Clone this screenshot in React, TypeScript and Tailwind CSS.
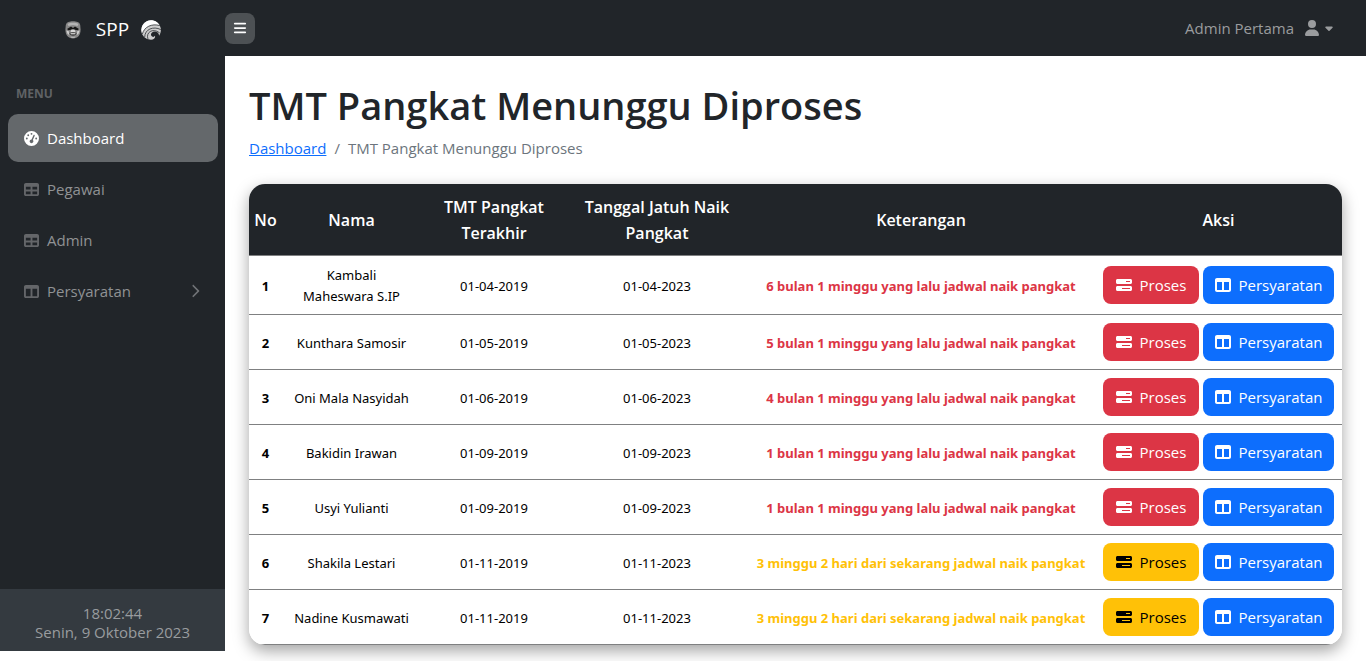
import React from "react";
import {
  FaBars,
  FaBarsProgress,
  FaCaretDown,
  FaChevronRight,
  FaGaugeHigh,
  FaTable,
  FaTableColumns,
  FaUser,
} from "react-icons/fa6";

type Row = { name: string; last: string; due: string; note: string; late: boolean };

const rows: Row[] = [
  { name: "Kambali Maheswara S.IP", last: "01-04-2019", due: "01-04-2023", note: "6 bulan 1 minggu yang lalu jadwal naik pangkat", late: true },
  { name: "Kunthara Samosir", last: "01-05-2019", due: "01-05-2023", note: "5 bulan 1 minggu yang lalu jadwal naik pangkat", late: true },
  { name: "Oni Mala Nasyidah", last: "01-06-2019", due: "01-06-2023", note: "4 bulan 1 minggu yang lalu jadwal naik pangkat", late: true },
  { name: "Bakidin Irawan", last: "01-09-2019", due: "01-09-2023", note: "1 bulan 1 minggu yang lalu jadwal naik pangkat", late: true },
  { name: "Usyi Yulianti", last: "01-09-2019", due: "01-09-2023", note: "1 bulan 1 minggu yang lalu jadwal naik pangkat", late: true },
  { name: "Shakila Lestari", last: "01-11-2019", due: "01-11-2023", note: "3 minggu 2 hari dari sekarang jadwal naik pangkat", late: false },
  { name: "Nadine Kusmawati", last: "01-11-2019", due: "01-11-2023", note: "3 minggu 2 hari dari sekarang jadwal naik pangkat", late: false },
];

function MaskLogo() {
  return (
    <svg viewBox="0 0 16 18" className="h-[18px] w-4" aria-hidden="true">
      <path d="M.8 4C1.500 1 4.500.3 8 .3S14.500 1 15.200 4l.4 4.500c0 5.500-2.600 9-7.600 9S.4 14 .4 8.500Z" fill="#878787" />
      <path d="M2.500 3C4.500 1.300 11.500 1.300 13.500 3L12.500 5 8 4 3.500 5Z" fill="#b4b4b4" />
      <path d="M2 8 6 5.500 8 7 10 5.500 14 8 12.500 9.300 10 8.800 8 8 6 8.800 3.500 9.300Z" fill="#161616" />
      <path d="M1.300 9.500 3.800 10.300 4.200 14 2.500 12.800ZM14.700 9.500 12.200 10.300 11.800 14 13.500 12.800Z" fill="#cfcfcf" />
      <path d="M6.300 8.800h3.400l.8 2.400h-5Z" fill="#d8d8d8" />
      <path d="M4.300 12q3.700-1.400 7.400 0-.6 2.700-3.700 2.700T4.300 12Z" fill="#3c3c3c" />
      <path d="M5.300 12.200h5.400l-.8 1.100H6.100Z" fill="#f2f2f2" />
      <path d="M5.500 15.300q2.500 1 5 0L9.500 17h-3Z" fill="#b5b5b5" />
    </svg>
  );
}

function SwirlLogo() {
  return (
    <svg viewBox="0 0 20 20" className="size-5" aria-hidden="true">
      <path d="M10 .2a9.800 9.800 0 0 1 9.600 12c-.3 1.300-.8 2.500-1.500 3.500 0-2.300-1.600-4.200-4.100-4.300-2.900-.1-4.800 2.400-3.700 4.400.9 1.500 3 1.500 3.600 0 .8 2-.8 3.900-3.900 4A9.800 9.800 0 0 1 10 .2Z" fill="#cdcdcd" />
      <path d="M10 .2c4 0 7.200 2.200 8.800 5.400C11.500 3.300 4.200 5.500 1.300 14A9.800 9.800 0 0 1 10 .2Z" fill="#fff" />
      <g fill="none" stroke="#2c3034" strokeWidth="0.8">
        <path d="M1.300 14.200C3 6.800 11 3.200 18.800 5.600" />
        <path d="M3.700 17C3.800 9.300 12.300 5.800 19.800 9.600" />
        <path d="M7 19.200C4.500 12.500 11.500 7.500 18.600 12.800" />
      </g>
    </svg>
  );
}

type NavProps = { icon: React.ReactNode; label: string; active?: boolean; more?: boolean };

function NavItem({ icon, label, active, more }: NavProps) {
  return (
    <a
      href="#"
      className={
        active
          ? "flex h-12 items-center rounded-[10px] bg-[#64686b] px-4 text-white"
          : "flex h-12 items-center rounded-[10px] px-4 text-[#909294]"
      }
    >
      <span className={active ? "mr-2 text-[15px] text-white" : "mr-2 text-[15px] text-[#646669]"}>{icon}</span>
      {label}
      {more && <FaChevronRight className="ml-auto size-3.5 text-[#707376]" />}
    </a>
  );
}

const head = "border-b border-[#7f8081] text-center align-middle font-semibold";
const cell = "border-b border-[#7f8081] px-2 pt-0.5 text-center align-middle";

export default function App() {
  return (
    <div className="flex min-h-screen flex-col bg-white font-['Open_Sans','Noto_Sans',sans-serif] text-[15px] leading-6 text-[#212529]">
      <header className="flex h-14 shrink-0 items-center bg-[#212529] text-[#9a9c9e]">
        <a href="#" className="flex w-[225px] shrink-0 items-center justify-center pt-1 pl-px text-[19px] text-white">
          <MaskLogo />
          <span className="mr-3 mb-0.5 ml-[15px]">SPP</span>
          <SwirlLogo />
        </a>
        <button aria-label="Toggle menu" className="flex h-[31px] w-[30px] items-center justify-center rounded-lg bg-[#4d5154] text-white">
          <FaBars className="size-3.5" />
        </button>
        <button className="mr-[31px] ml-auto flex items-center">
          Admin Pertama
          <FaUser className="ml-[11px] h-4 w-3.5" />
          <FaCaretDown className="ml-1 size-3" />
        </button>
      </header>

      <div className="flex flex-1">
        <aside className="mb-[10px] flex w-[225px] shrink-0 flex-col bg-[#212529]">
          <nav className="flex flex-1 flex-col gap-[3px] pr-[7px] pl-2">
            <h2 className="mt-7 mb-[3px] pl-2 text-xs leading-5 font-bold text-[#5f6265]">MENU</h2>
            <div className="mt-1 flex flex-col gap-[3px]">
              <NavItem icon={<FaGaugeHigh />} label="Dashboard" active />
              <NavItem icon={<FaTable />} label="Pegawai" />
              <NavItem icon={<FaTable />} label="Admin" />
              <NavItem icon={<FaTableColumns />} label="Persyaratan" more />
            </div>
          </nav>
          <div className="h-[62px] bg-[#343a40] pt-[15px] text-center leading-[19px] text-[#999c9f]">
            <div>18:02:44</div>
            <div>Senin, 9 Oktober 2023</div>
          </div>
        </aside>

        <main className="min-w-0 flex-1 px-6 pt-[25px]">
          <h1 className="mb-[7px] text-[38px] leading-[48px] font-semibold whitespace-nowrap">TMT Pangkat Menunggu Diproses</h1>
          <nav aria-label="Breadcrumb" className="mb-6 flex gap-2 text-[#6c757d]">
            <a href="#" className="text-[#0d6efd] underline">Dashboard</a>
            <span>/</span>
            <span>TMT Pangkat Menunggu Diproses</span>
          </nav>
          <div className="overflow-hidden rounded-2xl shadow-[0_6px_16px_rgba(0,0,0,0.36)]">
            <table className="w-full table-fixed border-separate border-spacing-0 bg-white">
              <colgroup>
                <col className="w-[33px]" />
                <col className="w-[139px]" />
                <col className="w-[146px]" />
                <col className="w-[180px]" />
                <col />
                <col className="w-[247px]" />
              </colgroup>
              <thead className="bg-[#212529] text-base leading-[26px] text-white">
                <tr className="h-[72px]">
                  <th className={head}>No</th>
                  <th className={`${head} px-2`}>Nama</th>
                  <th className={`${head} px-2`}>TMT Pangkat Terakhir</th>
                  <th className={`${head} px-2`}>Tanggal Jatuh Naik Pangkat</th>
                  <th className={`${head} px-2`}>Keterangan</th>
                  <th className={`${head} px-2`}>Aksi</th>
                </tr>
              </thead>
              <tbody className="font-['Noto_Sans','Open_Sans',sans-serif] text-[13px] leading-[21px] text-black">
                {rows.map((r, i) => (
                  <tr key={r.name}>
                    <th scope="row" className="border-b border-[#7f8081] pt-0.5 text-center font-bold">{i + 1}</th>
                    <td className="border-b border-[#7f8081] px-2.5 pt-[9px] pb-[7px] text-center align-middle">{r.name}</td>
                    <td className={cell}>{r.last}</td>
                    <td className={cell}>{r.due}</td>
                    <td className={`${cell} font-bold whitespace-nowrap ${r.late ? "text-[#dc3545]" : "text-[#ffc107]"}`}>{r.note}</td>
                    <td className="border-b border-[#7f8081] px-2 py-2 align-middle">
                      <div className="flex gap-1 font-['Open_Sans','Noto_Sans',sans-serif] text-[15px]">
                        <button
                          className={
                            r.late
                              ? "flex h-[38px] w-24 items-center justify-center gap-2 rounded-lg bg-[#dc3545] text-white"
                              : "flex h-[38px] w-24 items-center justify-center gap-2 rounded-lg bg-[#ffc107] text-black"
                          }
                        >
                          <FaBarsProgress className="size-4" />
                          Proses
                        </button>
                        <button className="flex h-[38px] w-[131px] items-center justify-center gap-2 rounded-lg bg-[#0d6efd] text-white">
                          <FaTableColumns className="size-4" />
                          Persyaratan
                        </button>
                      </div>
                    </td>
                  </tr>
                ))}
              </tbody>
            </table>
          </div>
        </main>
      </div>
    </div>
  );
}
